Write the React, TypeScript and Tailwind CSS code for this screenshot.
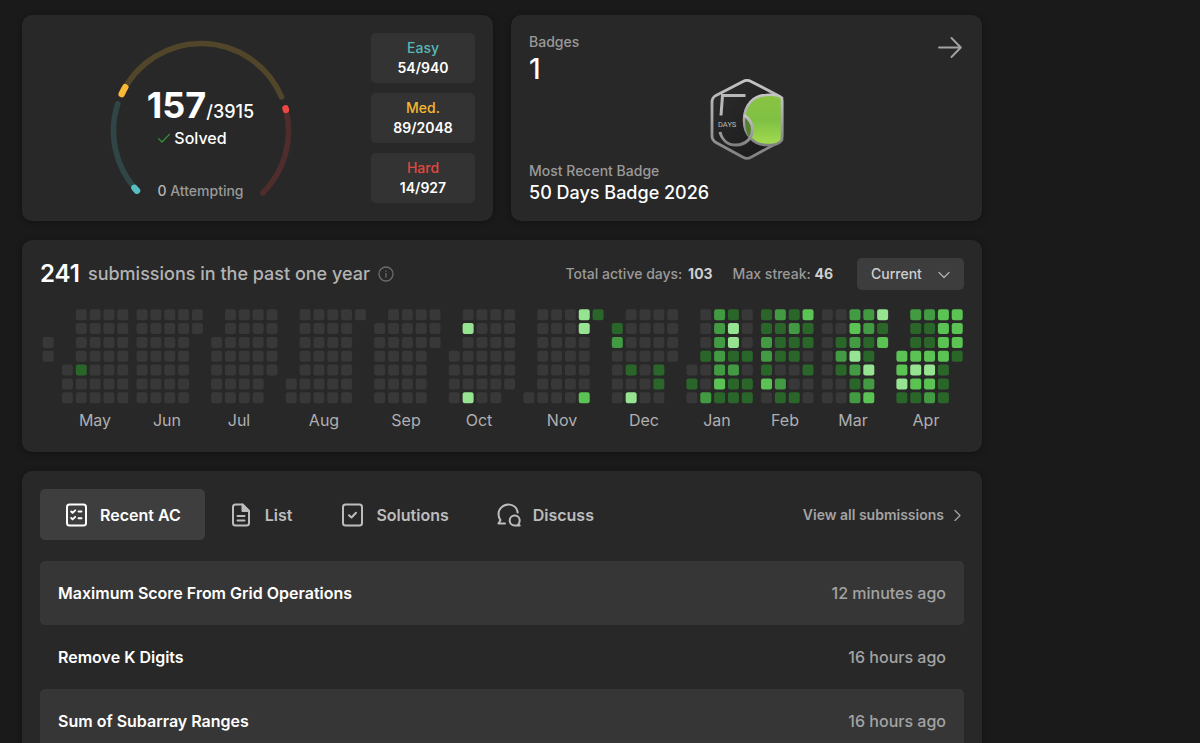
import React, { useState } from 'react';

const CELL = 11;
const PITCH = 13.84;
const MONTH_GAP = 5.4;
const LEVELS = ['#383838', '#2a662a', '#429a42', '#5bc254', '#96e492'];
const FULL = '0000000';

// One string per week, one character per day: "." is outside the month, 0-4 is the activity level
const MONTHS = [
    { label: '', center: 0, weeks: ['..00...'] },
    { label: 'May', center: 55, weeks: ['....000', '0000100', FULL, FULL, FULL] },
    { label: 'Jun', center: 127, weeks: [FULL, FULL, FULL, FULL, '00.....'] },
    { label: 'Jul', center: 199, weeks: ['..00000', FULL, FULL, FULL, '00000..'] },
    { label: 'Aug', center: 284, weeks: ['.....00', FULL, FULL, FULL, FULL, '0......'] },
    { label: 'Sep', center: 366, weeks: ['.000000', FULL, FULL, FULL, '000....'] },
    { label: 'Oct', center: 439, weeks: ['...0000', '0400004', FULL, FULL, '000000.'] },
    { label: 'Nov', center: 522, weeks: ['......0', FULL, FULL, FULL, '4400003', '1......'] },
    { label: 'Dec', center: 604, weeks: ['.120000', '0000104', FULL, '0000110', '0000...'] },
    { label: 'Jan', center: 677, weeks: ['....010', '0001002', '2222231', '1441211', '0001011'] },
    { label: 'Feb', center: 745, weeks: ['1122130', '2111021', '1211001', '3110100'] },
    { label: 'Mar', center: 813, weeks: [FULL, '0012100', '2324212', '2211423', '413....'] },
    { label: 'Apr', center: 886, weeks: ['...3341', '2113431', '2113432', '3333111', '3331...'] },
];

const STATS = [
    { label: 'Easy', value: '54/940', color: 'text-[#56b8b9]' },
    { label: 'Med.', value: '89/2048', color: 'text-[#f5b731]' },
    { label: 'Hard', value: '14/927', color: 'text-[#e0483f]' },
];

const SUBMISSIONS = [
    { title: 'Maximum Score From Grid Operations', time: '12 minutes ago' },
    { title: 'Remove K Digits', time: '16 hours ago' },
    { title: 'Sum of Subarray Ranges', time: '16 hours ago' },
];

const arc = (from: number, to: number) => {
    const point = (deg: number) => {
        const rad = (deg * Math.PI) / 180;
        return `${(92 + 87.5 * Math.cos(rad)).toFixed(2)} ${(92 + 87.5 * Math.sin(rad)).toFixed(2)}`;
    };
    return `M${point(from)}A87.5 87.5 0 0 1 ${point(to)}`;
};

const Gauge: React.FC = () => (
    <div className="relative h-[160px] w-[184px] shrink-0">
        <svg className="h-full w-full" viewBox="0 0 184 160" fill="none" strokeWidth="5.6" strokeLinecap="round">
            <path d={arc(137, 198)} stroke="#2f4546" />
            <path d={arc(205, 337)} stroke="#51452a" />
            <path d={arc(-15, 45)} stroke="#4e2d2c" />
            <path d={arc(137, 139.5)} stroke="#56bfc1" strokeWidth="6.5" />
            <path d={arc(205, 210)} stroke="#fbb937" strokeWidth="6.5" />
            <path d={arc(-15, -14)} stroke="#ef4743" strokeWidth="6.5" />
        </svg>
        <div className="absolute inset-0 flex flex-col items-center pt-[46px] text-white">
            <div className="flex items-baseline leading-9">
                <span className="text-4xl font-bold">157</span>
                <span className="text-lg font-medium">/3915</span>
            </div>
            <div className="-ml-4 flex items-center gap-1 text-base font-medium leading-6">
                <svg className="h-3 w-3" viewBox="0 0 12 12" fill="none" stroke="#2f9a3d" strokeWidth="1.2" strokeLinecap="round" strokeLinejoin="round">
                    <path d="M.6 6.6 4 10 11.4 2.4" />
                </svg>
                <span>Solved</span>
            </div>
            <p className="mt-auto text-sm font-medium leading-4 text-[#9a9a9a]">
                <span className="text-[#b8b8b8]">0</span> Attempting
            </p>
        </div>
    </div>
);

const DaysBadge: React.FC = () => (
    <svg className="h-[82px] w-[76px]" viewBox="0 0 76 82" fill="none">
        <defs>
            <linearGradient id="rim" x1="0" y1="0" x2="0" y2="1">
                <stop offset="0" stopColor="#c4c4c4" />
                <stop offset="0.5" stopColor="#a6a6a6" />
                <stop offset="1" stopColor="#808080" />
            </linearGradient>
            <linearGradient id="inner" x1="0" y1="0" x2="1" y2="1">
                <stop offset="0" stopColor="#2e2e2e" />
                <stop offset="1" stopColor="#171717" />
            </linearGradient>
            <linearGradient id="lime" x1="0" y1="0" x2="0" y2="1">
                <stop offset="0" stopColor="#8ac442" />
                <stop offset="0.5" stopColor="#7fc043" />
                <stop offset="1" stopColor="#a3dc50" />
            </linearGradient>
        </defs>
        <path d="M34 2.4Q38 .4 42 2.4L69 16.4Q73 18.8 73 23V57Q73 61.2 69 63.6L42 78.2Q38 80.4 34 78.2L7 63.6Q3 61.2 3 57V23Q3 18.8 7 16.4Z" fill="url(#inner)" stroke="url(#rim)" strokeWidth="2.8" />
        <path d="M57 16Q69 15 73 19V61Q69 67 57 66C45 66 35 56 35 41S45 16 57 16Z" fill="url(#lime)" stroke="url(#rim)" strokeWidth="2.6" />
        <path d="M36.3 37C44 43 45 53 40 58.5Q35 50 36.3 37Z" fill="#55802f" />
        <path d="M36.5 16.5H13.5L12 36.5" stroke="#b8b8b8" strokeWidth="3" />
        <path d="M11 53C13 61 19 66 27 66C37 66 43.5 59 43.5 50.5C43.5 44 40 39.5 35 36" stroke="url(#rim)" strokeWidth="3" />
        <text x="9" y="48" fill="#bdbdbd" fontSize="7.5" fontFamily="Roboto, sans-serif">DAYS</text>
    </svg>
);

const Heatmap: React.FC = () => {
    let x = 2.7;
    const cells: React.ReactNode[] = [];
    MONTHS.forEach((month, m) => {
        month.weeks.forEach((week, w) => {
            week.split('').forEach((day, d) => {
                if (day === '.') return;
                cells.push(
                    <rect key={`${m}-${w}-${d}`} x={x + w * PITCH} y={1.2 + d * PITCH} width={CELL} height={CELL} rx="2.2" fill={LEVELS[Number(day)]} />
                );
            });
        });
        x += month.weeks.length * PITCH + MONTH_GAP;
    });

    return (
        <svg className="mt-[18px] w-full" viewBox="0 0 924 126" role="img">
            {cells}
            {MONTHS.map((month) => (
                <text key={month.label} x={month.center} y="118" textAnchor="middle" fontSize="16" fill="#afafb2">
                    {month.label}
                </text>
            ))}
        </svg>
    );
};

const iconProps = {
    className: 'h-6 w-6 shrink-0',
    viewBox: '0 0 24 24',
    fill: 'none',
    stroke: 'currentColor',
    strokeWidth: 2,
    strokeLinecap: 'round' as const,
    strokeLinejoin: 'round' as const,
};

const TABS = [
    {
        label: 'Recent AC',
        icon: (
            <svg {...iconProps}>
                <rect x="3" y="1.5" width="19" height="21" rx="2.5" />
                <path d="m7.2 8.5 1.4 1.4 2.6-2.6M7.2 15l1.4 1.4 2.6-2.6M14.5 8.5h3M14.5 15.2h3" strokeWidth="1.9" />
            </svg>
        ),
    },
    {
        label: 'List',
        icon: (
            <svg {...iconProps}>
                <path d="M13.5 1.5H6.5A2.5 2.5 0 0 0 4 4v16a2.5 2.5 0 0 0 2.5 2.5h11A2.5 2.5 0 0 0 20 20V8z" />
                <path d="M13.5 1.5V8H20z" fill="currentColor" />
                <path d="M8.5 13h7M8.5 17.5h7" />
            </svg>
        ),
    },
    {
        label: 'Solutions',
        icon: (
            <svg {...iconProps}>
                <rect x="3" y="1.5" width="19" height="21" rx="2.5" />
                <path d="m9 12.2 2.5 2.3 4.5-4.8" />
            </svg>
        ),
    },
    {
        label: 'Discuss',
        icon: (
            <svg {...iconProps}>
                <path d="M20.7 9.5C20 5 16.5 1.5 11.5 1.5 6 1.5 1.5 6 1.5 11c0 2.5.8 4.5 2 6L1.5 20.5H8" />
                <path d="M21 21.7c1-.9 1.7-2.4 1.7-4.2 0-3-2.2-5-5-5s-5 2.2-5 5 2.2 5 5 5h5z" />
            </svg>
        ),
    },
];

const App: React.FC = () => {
    const [activeTab, setActiveTab] = useState('Recent AC');
    const card = 'rounded-[10px] bg-[#282828] shadow-[0_1px_6px_rgba(0,0,0,0.35)]';

    return (
        <div className="h-screen overflow-hidden bg-[#1a1a1a] font-['Inter',sans-serif] text-white">
            <main className="mx-[22px] flex max-w-[960px] flex-col gap-[19px] pt-[15px]">
                <div className="grid grid-cols-2 gap-[18px]">
                    <section className={`${card} flex justify-between p-[18px]`}>
                        <div className="flex flex-1 justify-center pr-2.5 pt-1.5">
                            <Gauge />
                        </div>
                        <div className="flex w-[104px] flex-col gap-2.5">
                            {STATS.map((stat) => (
                                <div key={stat.label} className="flex h-[50px] flex-col items-center justify-center rounded-[5px] bg-[#333333] text-sm">
                                    <span className={`${stat.color} font-medium leading-5`}>{stat.label}</span>
                                    <span className="font-semibold leading-5">{stat.value}</span>
                                </div>
                            ))}
                        </div>
                    </section>

                    <section className={`${card} relative flex flex-col justify-between p-[18px]`}>
                        <div>
                            <h2 className="text-sm font-medium leading-[18px] text-[#9a9a9a]">Badges</h2>
                            <p className="text-[28px] font-medium leading-9">1</p>
                        </div>
                        <div>
                            <p className="text-sm font-medium leading-6 text-[#9a9a9a]">Most Recent Badge</p>
                            <p className="text-lg font-medium leading-5">50 Days Badge 2026</p>
                        </div>
                        <div className="absolute inset-x-0 top-16 flex justify-center">
                            <DaysBadge />
                        </div>
                        <a href="#badges" aria-label="Badges" className="absolute right-5 top-5 text-[#a3a3a3]">
                            <svg className="h-6 w-6" viewBox="0 0 24 24" fill="none" stroke="currentColor" strokeWidth="1.9" strokeLinecap="round" strokeLinejoin="round">
                                <path d="M1 12.5h21.5M13.5 3l9.3 9.5-9.3 9.5" />
                            </svg>
                        </a>
                    </section>
                </div>

                <section className={`${card} p-[18px]`}>
                    <div className="flex items-center">
                        <p className="flex items-center gap-2 text-lg font-medium leading-8 text-[#b3b3b3]">
                            <span className="text-2xl font-semibold leading-8 text-white">241</span>
                            submissions in the past one year
                        </p>
                        <svg className="ml-2 h-4 w-4" viewBox="0 0 16 16" fill="none" stroke="#6b6b6b" strokeWidth="1.3" strokeLinecap="round">
                            <circle cx="8" cy="8" r="7" />
                            <path d="M8 7.5v3.5M8 5v.2" />
                        </svg>
                        <div className="ml-auto flex items-center gap-5 text-sm font-medium text-[#9a9a9a]">
                            <span>Total active days: <b className="ml-0.5 font-bold text-[#cfcfcf]">103</b></span>
                            <span>Max streak: <b className="font-bold text-[#cfcfcf]">46</b></span>
                            <div className="relative ml-1">
                                <select aria-label="Period" className="h-8 w-[107px] appearance-none rounded-[5px] bg-[#3d3d3d] pl-3.5 text-sm font-medium text-[#cfcfcf]">
                                    <option>Current</option>
                                </select>
                                <svg className="pointer-events-none absolute right-3.5 top-2.5 h-3 w-3" viewBox="0 0 12 12" fill="none" stroke="#b0b0b0" strokeWidth="1.3" strokeLinecap="round" strokeLinejoin="round">
                                    <path d="m1 4.5 5 5 5-5" />
                                </svg>
                            </div>
                        </div>
                    </div>
                    <Heatmap />
                </section>

                <section className={`${card} p-[18px]`}>
                    <div className="flex items-center justify-between">
                        <div role="tablist" className="flex">
                            {TABS.map((tab) => (
                                <button
                                    key={tab.label}
                                    role="tab"
                                    aria-selected={tab.label === activeTab}
                                    onClick={() => setActiveTab(tab.label)}
                                    className={`flex h-[51px] items-center gap-3 rounded-[5px] px-6 text-base font-semibold ${tab.label === activeTab ? 'bg-[#3e3e3e] text-white' : 'text-[#bdbdbd]'}`}
                                >
                                    {tab.icon}
                                    {tab.label}
                                </button>
                            ))}
                        </div>
                        <a href="#submissions" className="flex items-center gap-2 text-sm font-semibold text-[#a3a3a3]">
                            View all submissions
                            <svg className="h-3 w-3" viewBox="0 0 12 12" fill="none" stroke="currentColor" strokeWidth="1.3" strokeLinecap="round" strokeLinejoin="round">
                                <path d="m3 1.5 5 5-5 5" />
                            </svg>
                        </a>
                    </div>
                    <div className="mt-[21px]">
                        {SUBMISSIONS.map((item) => (
                            <a key={item.title} href="#submission" className="flex h-16 items-center justify-between rounded-[5px] px-[18px] text-base font-semibold odd:bg-[#363636]">
                                <span>{item.title}</span>
                                <span className="font-medium text-[#a3a3a3]">{item.time}</span>
                            </a>
                        ))}
                    </div>
                </section>
            </main>
        </div>
    );
};

export default App;
